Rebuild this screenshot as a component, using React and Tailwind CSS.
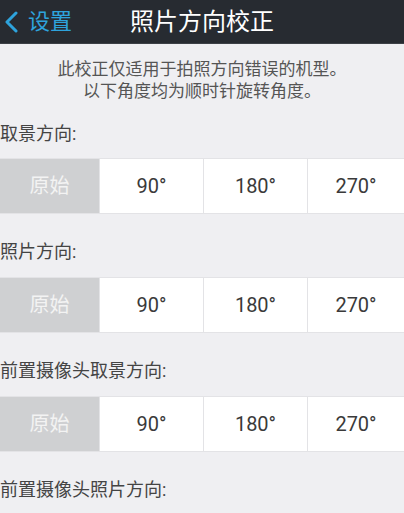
import React, { useState } from 'react';

const sections = ['取景方向:', '照片方向:', '前置摄像头取景方向:', '前置摄像头照片方向:'];
const options = ['原始', '90°', '180°', '270°'];

function OptionRow() {
  const [selected, setSelected] = useState(0);
  return (
    <div className="flex h-[56px] border-y border-[#e3e3e6] bg-[#e3e3e6]">
      {options.map((opt, i) => (
        <button
          key={opt}
          onClick={() => setSelected(i)}
          className={
            (i === 0 ? 'w-[99px] ' : i === 3 ? 'flex-1 ml-px ' : 'w-[103px] ml-px ') +
            (selected === i ? 'bg-[#cfd0d2] text-[#f3f3f3] ' : 'bg-white text-[#3a3a3a] ') +
            'flex items-center justify-center text-[20px]'
          }
        >
          {opt}
        </button>
      ))}
    </div>
  );
}

export default function App() {
  return (
    <div
      className="w-[404px] h-[513px] overflow-hidden bg-[#efeff2]"
      style={{ fontFamily: 'Roboto, "Noto Sans CJK SC", sans-serif' }}
    >
      {/* Header */}
      <div className="relative h-[44px] bg-[#272b31] border-b border-[#3c4046] flex items-center">
        <div className="flex items-center pl-[4px] text-[#2ea3dc]">
          <svg width="16" height="22" viewBox="0 0 16 22" className="mr-[8px]">
            <path d="M12 2 L3 11 L12 20" fill="none" stroke="#2ea3dc" strokeWidth="3" strokeLinecap="round" strokeLinejoin="round" />
          </svg>
          <span className="text-[22px] leading-none">设置</span>
        </div>
        <div className="absolute inset-0 flex items-center justify-center text-white text-[24px] leading-none">
          照片方向校正
        </div>
      </div>

      {/* Notice */}
      <div className="pt-[14px] text-center text-[#555] text-[17px] leading-[22px]">
        <p>此校正仅适用于拍照方向错误的机型。</p>
        <p>以下角度均为顺时针旋转角度。</p>
      </div>

      {sections.map((label, idx) => (
        <div key={label}>
          <div className={(idx === 0 ? 'h-[56px] pt-[20px] ' : 'h-[63px] pt-[26px] ') + 'text-[18px] leading-[24px] text-[#444]'}>
            {label}
          </div>
          {idx < 3 && <OptionRow />}
        </div>
      ))}
    </div>
  );
}
